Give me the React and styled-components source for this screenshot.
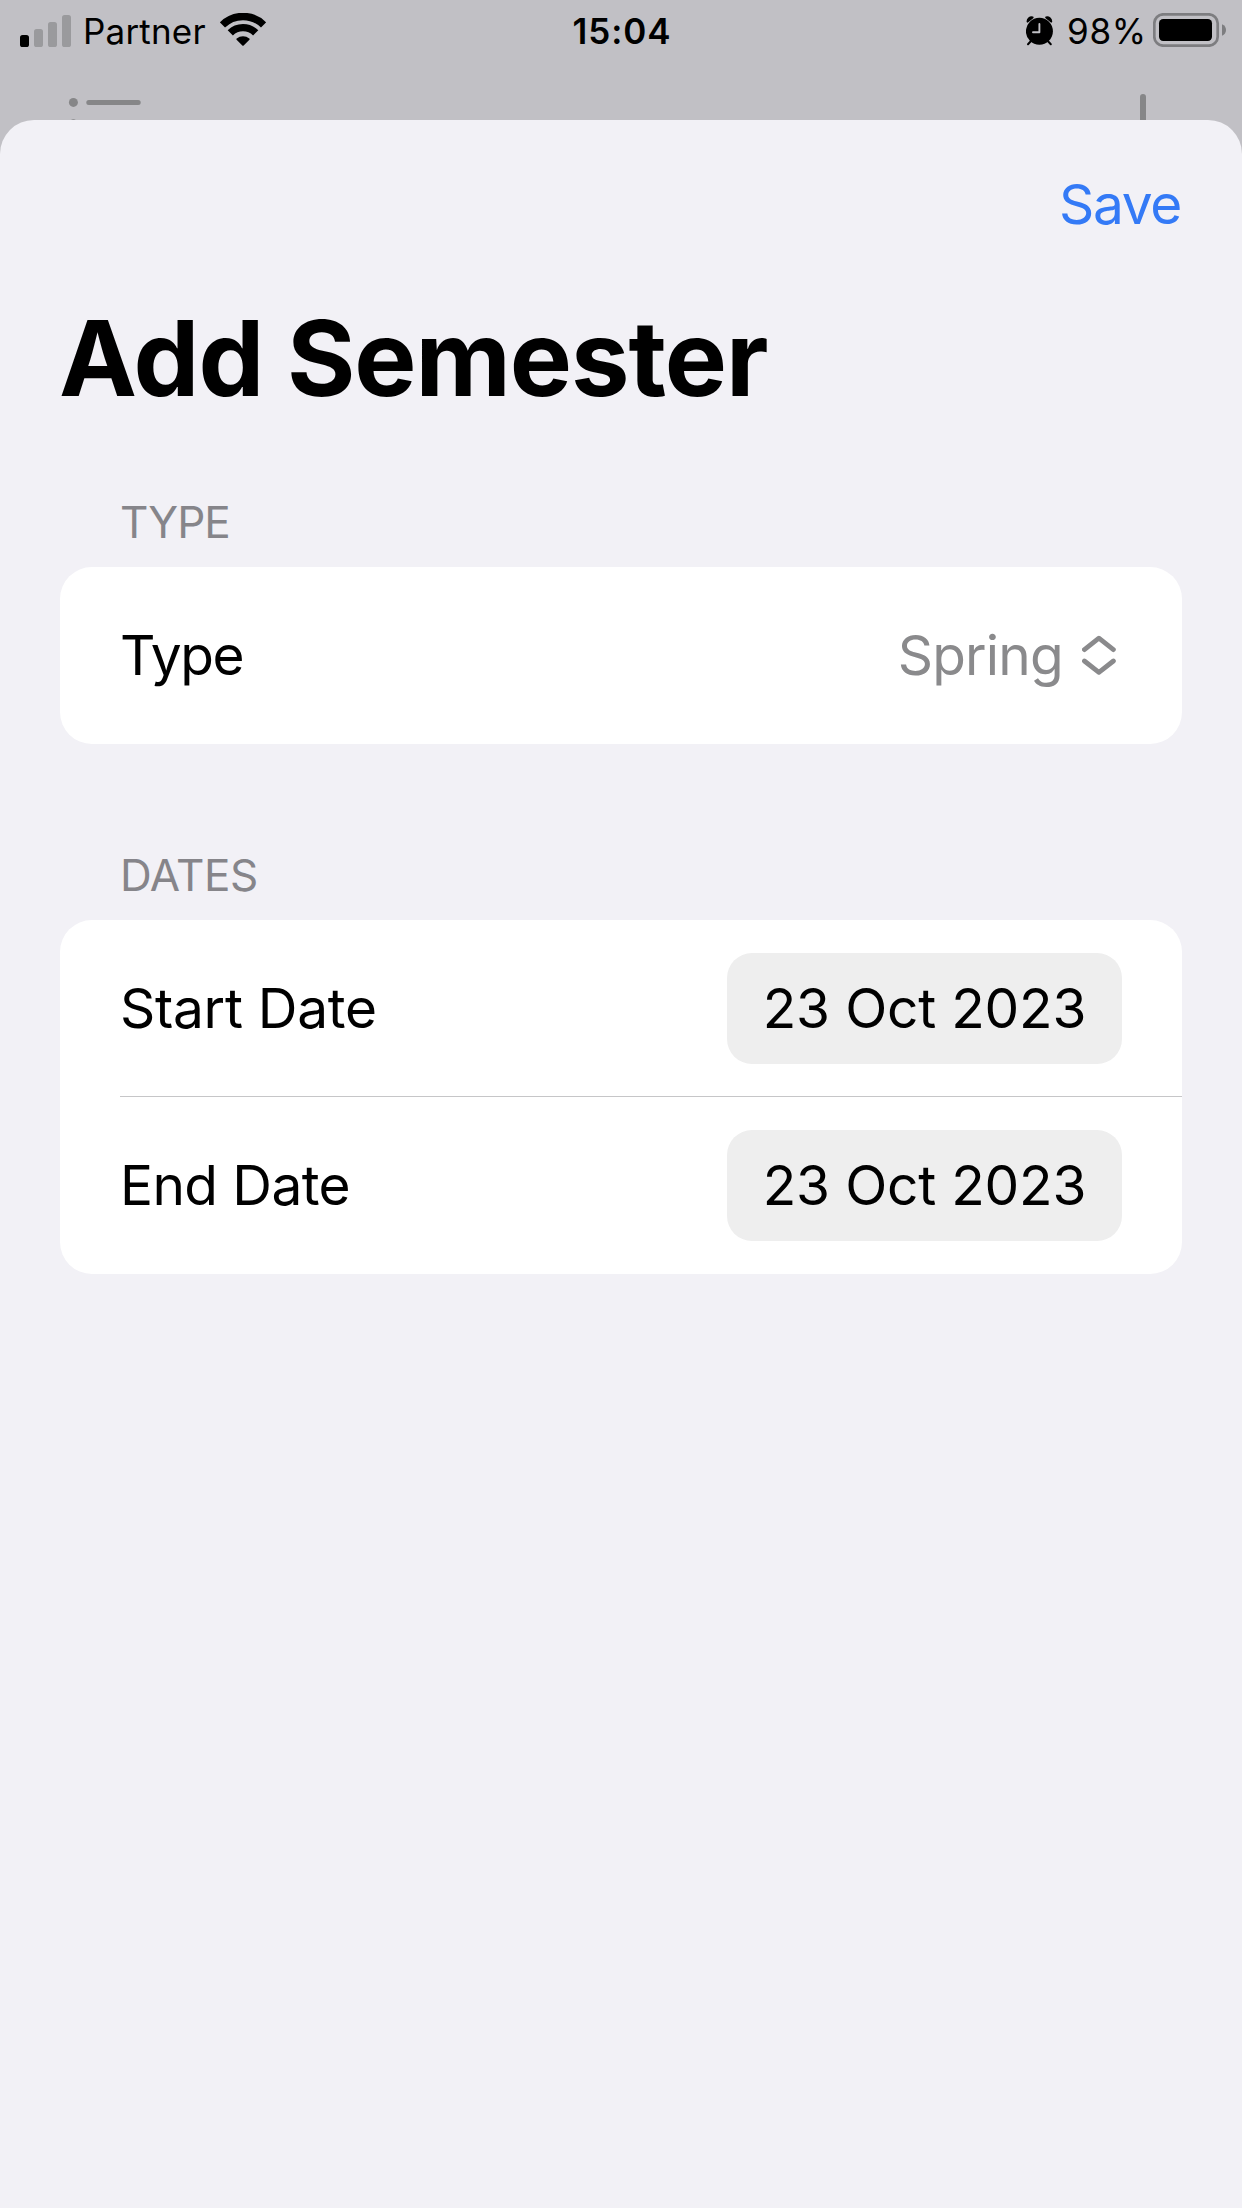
import React from 'react';
import styled, { createGlobalStyle } from 'styled-components';

const Global = createGlobalStyle`
  *, *::before, *::after { box-sizing: border-box; }
  body {
    margin: 0;
    background: #c1c0c5;
    font-family: Inter, "Liberation Sans", sans-serif;
    color: #000;
  }
  button { border: 0; padding: 0; background: none; font: inherit; color: inherit; }
  svg { display: block; flex: none; }
`;

const Screen = styled.div`
  display: flex;
  flex-direction: column;
  width: 1242px;
  height: 2208px;
  overflow: hidden;
  background: #c1c0c5;
`;

const StatusBar = styled.header`
  display: grid;
  grid-template-columns: 1fr auto 1fr;
  align-items: center;
  height: 62px;
  padding: 0 18px 0 20px;
`;

const StatusGroup = styled.div`
  display: flex;
  align-items: center;
  justify-content: ${(p) => (p.$end ? 'flex-end' : 'flex-start')};
  margin-right: ${(p) => (p.$end ? -2 : 0)}px;
`;

const StatusText = styled.span`
  font-size: 35px;
  line-height: 62px;
  font-weight: ${(p) => p.$weight || 400};
  letter-spacing: ${(p) => p.$tracking}px;
  margin: 0 ${(p) => p.$right || 0}px 0 ${(p) => p.$left || 0}px;
`;

const RaisedIcon = styled.svg`
  margin-top: -2px;
`;

const Peek = styled.div`
  display: flex;
  justify-content: space-between;
  height: 58px;
  padding: 0 96px 0 68px;
`;

const Sheet = styled.main`
  flex: 1;
  background: #f2f1f6;
  border-radius: 34px 34px 0 0;
  padding: 0 60px;
`;

const Toolbar = styled.div`
  display: flex;
  justify-content: flex-end;
  height: 168px;
  padding-right: 1px;
`;

const SaveButton = styled.button`
  height: 168px;
  line-height: 168px;
  font-size: 55px;
  letter-spacing: -1.3px;
  color: #347af6;
`;

const Title = styled.h1`
  margin: 0 0 0 -1px;
  height: 140px;
  font-size: 104.5px;
  line-height: 140px;
  font-weight: 700;
  letter-spacing: -1.05px;
`;

const Section = styled.section`
  padding-top: ${(p) => p.$top}px;
`;

const SectionLabel = styled.h2`
  margin: 0;
  padding-left: 60px;
  height: 90px;
  font-size: 44px;
  line-height: 90px;
  font-weight: 400;
  letter-spacing: ${(p) => p.$tracking}px;
  color: #86858a;
`;

const Card = styled.div`
  background: #fff;
  border-radius: 32px;
  padding-left: 60px;
`;

const Row = styled.div`
  display: flex;
  align-items: center;
  justify-content: space-between;
  height: 177px;
  padding-right: 60px;
  & + & { box-shadow: 0 -1px 0 #c6c6c8; }
`;

const RowLabel = styled.span`
  font-size: 55px;
  line-height: 70px;
  padding-bottom: 1px;
  letter-spacing: ${(p) => p.$tracking}px;
`;

const Picker = styled.button`
  display: flex;
  align-items: center;
  gap: 19px;
  padding: 0 6px 1px 0;
  font-size: 55px;
  line-height: 70px;
  letter-spacing: -0.8px;
  color: #8a8a8c;
`;

const DateChip = styled.button`
  width: 395px;
  height: 111px;
  border-radius: 25px;
  background: #eeeeee;
  font-size: 55px;
  line-height: 111px;
  letter-spacing: -0.2px;
  text-align: center;
`;

const SignalIcon = () => (
  <svg width="51" height="32" viewBox="0 0 51 32">
    <rect x="0" y="20" width="9" height="12" rx="2.6" />
    <g fill="#9a9a9d">
      <rect x="14" y="14" width="9" height="18" rx="2.6" />
      <rect x="28" y="7" width="9" height="25" rx="2.6" />
      <rect x="42" y="0" width="9" height="32" rx="2.6" />
    </g>
  </svg>
);

const WifiIcon = () => (
  <RaisedIcon width="46" height="34" viewBox="220 13 46 34">
    <g fill="none" stroke="#000" strokeWidth="7.4">
      <path d="M222.4 25A29.1 29.1 0 0 1 263.6 25" />
      <path d="M230.3 32.9A18 18 0 0 1 255.7 32.9" />
    </g>
    <path d="M236.6 39.8Q236 39.2 236.7 38.6A10 10 0 0 1 249.3 38.6Q250 39.2 249.4 39.8L243.7 45.4Q243 46 242.3 45.4Z" />
  </RaisedIcon>
);

const AlarmIcon = () => (
  <svg width="27" height="30" viewBox="1026 16 27 30">
    <path d="M1027.6 21.6A4 4 0 0 1 1032.6 17.4Z" stroke="#000" strokeWidth="2" strokeLinejoin="round" />
    <path d="M1051.2 21.6A4 4 0 0 0 1046.2 17.4Z" stroke="#000" strokeWidth="2" strokeLinejoin="round" />
    <path d="M1031 41L1028 44.2M1047.8 41L1050.8 44.2" stroke="#000" strokeWidth="2" strokeLinecap="round" />
    <circle cx="1039.4" cy="31.3" r="13.5" />
    <path d="M1039.4 24V32.3H1033" fill="none" stroke="#c1c0c5" strokeWidth="1.9" strokeLinecap="round" strokeLinejoin="round" />
  </svg>
);

const BatteryIcon = () => (
  <RaisedIcon width="73" height="34" viewBox="1153 13 73 34">
    <rect x="1154.3" y="14.3" width="63.4" height="31.4" rx="9" fill="none" stroke="#7d7d80" strokeWidth="2.7" />
    <rect x="1159" y="19" width="53" height="22" rx="4.2" />
    <path d="M1222 24.2Q1226 26 1226 30Q1226 34 1222 35.8Z" fill="#7d7d80" />
  </RaisedIcon>
);

const ListGlyph = () => (
  <svg width="74" height="58" viewBox="68 62 74 58" fill="#868688">
    <circle cx="73.4" cy="102.4" r="4.5" />
    <rect x="86.3" y="100" width="54.4" height="5" rx="2.5" />
    <circle cx="73.4" cy="123.8" r="4.5" />
  </svg>
);

const PlusGlyph = () => (
  <svg width="6" height="58" viewBox="1140 62 6 58" fill="#868688">
    <rect x="1140" y="94" width="6" height="40" rx="3" />
  </svg>
);

const UpDownIcon = () => (
  <svg width="34" height="40" viewBox="1082 635 34 40" fill="none" stroke="#8a8a8c" strokeWidth="4.8" strokeLinecap="round" strokeLinejoin="round">
    <path d="M1084.4 649.6L1098.9 638.2L1113.4 649.6M1084.4 661L1098.9 672.4L1113.4 661" />
  </svg>
);

const dates = [
  { label: 'Start Date', value: '23 Oct 2023', tracking: -0.28 },
  { label: 'End Date', value: '23 Oct 2023', tracking: -0.6 },
];

export default function App() {
  return (
    <Screen>
      <Global />
      <StatusBar>
        <StatusGroup>
          <SignalIcon />
          <StatusText $tracking={0.2} $left={12} $right={14}>Partner</StatusText>
          <WifiIcon />
        </StatusGroup>
        <StatusText $tracking={0.9} $weight={600}>15:04</StatusText>
        <StatusGroup $end>
          <AlarmIcon />
          <StatusText $tracking={0.8} $left={14} $right={6}>98%</StatusText>
          <BatteryIcon />
        </StatusGroup>
      </StatusBar>
      <Peek>
        <ListGlyph />
        <PlusGlyph />
      </Peek>
      <Sheet>
        <Toolbar>
          <SaveButton>Save</SaveButton>
        </Toolbar>
        <Title>Add Semester</Title>
        <Section $top={49}>
          <SectionLabel $tracking={-1}>TYPE</SectionLabel>
          <Card>
            <Row>
              <RowLabel $tracking={-1.4}>Type</RowLabel>
              <Picker>
                Spring
                <UpDownIcon />
              </Picker>
            </Row>
          </Card>
        </Section>
        <Section $top={86}>
          <SectionLabel $tracking={-0.4}>DATES</SectionLabel>
          <Card>
            {dates.map((d) => (
              <Row key={d.label}>
                <RowLabel $tracking={d.tracking}>{d.label}</RowLabel>
                <DateChip>{d.value}</DateChip>
              </Row>
            ))}
          </Card>
        </Section>
      </Sheet>
    </Screen>
  );
}
